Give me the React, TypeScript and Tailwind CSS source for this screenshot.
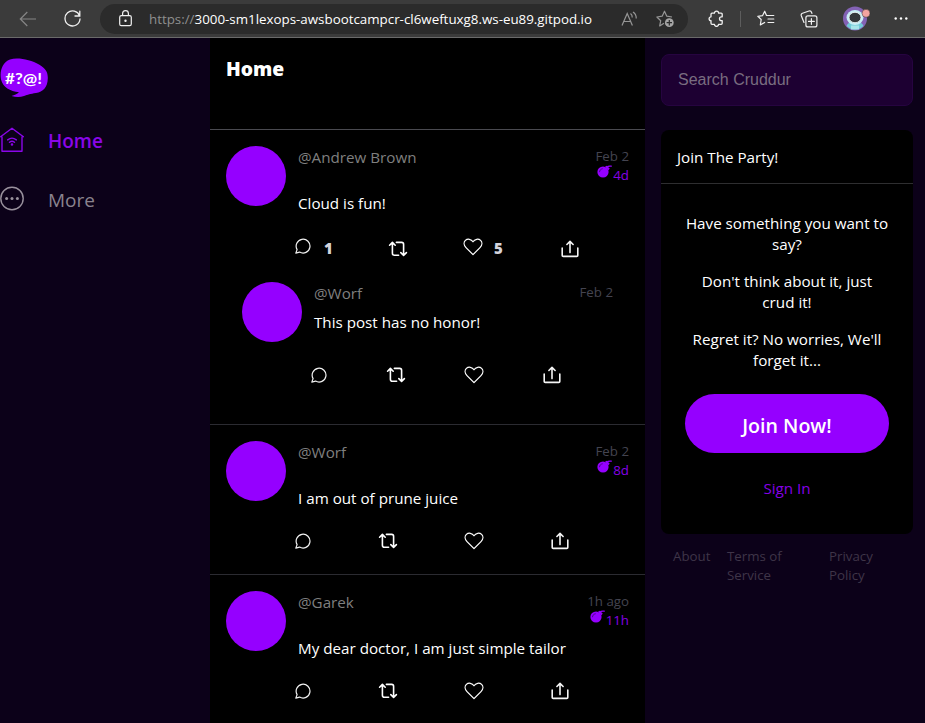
import React from "react";

const SANS = "font-['Open_Sans','Noto_Sans',sans-serif]";

function ReplyIcon() {
  return (
    <svg width="16" height="16" viewBox="0 0 16 16" fill="none" stroke="#f2f2f2" strokeWidth="1.2" strokeLinejoin="round">
      <path d="M2.1 11.6A6.9 6.9 0 1 1 4.6 14.1L.8 15.1Z" />
    </svg>
  );
}

function RepostIcon() {
  return (
    <svg width="20" height="16" viewBox="0 0 20 16" fill="none" stroke="#fff" strokeWidth="1.6" strokeLinecap="round" strokeLinejoin="round">
      <path d="M1.6 4.2 4.4 1.4l2.8 2.8M4.4 1.8v10.4a2 2 0 0 0 2 2h4.2" />
      <path d="M8.4 1.4h5.2a2 2 0 0 1 2 2v10.6M12.8 11.6l2.8 2.8 2.8-2.8" />
    </svg>
  );
}

function HeartIcon() {
  return (
    <svg width="20" height="18" viewBox="0 0 20 18" fill="none" stroke="#fff" strokeWidth="1.25" strokeLinejoin="round">
      <path d="M10 16.6 3 9.6C.6 7.200.6 4.200 2.400 2.400 4.500.5 8.200.8 10 3.800 11.800.8 15.500.5 17.600 2.400 19.400 4.200 19.400 7.200 17 9.600Z" />
    </svg>
  );
}

function ShareIcon() {
  return (
    <svg width="18" height="18" viewBox="0 0 18 18" fill="none" stroke="#f5f5f5" strokeWidth="1.6" strokeLinecap="round" strokeLinejoin="round">
      <path d="M1.200 8v7.400a1 1 0 0 0 1 1h13.600a1 1 0 0 0 1-1V8" />
      <path d="M9 12.600V1.400M5.900 4.500 9 1.400l3.100 3.100" />
    </svg>
  );
}

function BombIcon() {
  return (
    <svg className="-mt-px" width="15" height="13" viewBox="0 0 15 13" fill="#9500ff">
      <circle cx="6" cy="7" r="5.600" />
      <path d="m8 1.700 1.700-.9 3 2.700-1.200 1.700Z" />
      <path d="M10 2.200c1-1.300 2.200-1.300 4.300-1" fill="none" stroke="#9500ff" strokeWidth="1.200" strokeLinecap="round" />
      <path d="M2.500 6.800c.2-1.700 1.200-2.700 2.800-3" fill="none" stroke="#3c0070" strokeWidth=".8" strokeLinecap="round" />
    </svg>
  );
}

function Avatar() {
  return <div className="size-[60px] shrink-0 rounded-full bg-[#9500ff]" />;
}

function Time({ ago, expires }: { ago: string; expires?: string }) {
  return (
    <div className="flex flex-col items-end pt-px text-[13.3px] leading-[19px]">
      <span className="text-[#444450]">{ago}</span>
      {expires && (
        <span className="flex items-start gap-px text-[#8500e6]">
          <BombIcon />
          {expires}
        </span>
      )}
    </div>
  );
}

function Actions({ nested = false }: { nested?: boolean }) {
  return (
    <div className={`flex h-[18px] items-center justify-between ${nested ? "w-[250px]" : "w-[274px]"}`}>
      <ReplyIcon />
      <RepostIcon />
      <HeartIcon />
      <ShareIcon />
    </div>
  );
}

function Post({ handle, message, ago, expires, children }: { handle: string; message: string; ago: string; expires: string; children: React.ReactNode }) {
  return (
    <article className="border-b border-[#2b2b31] px-4 pt-4">
      <div className="flex">
        <Avatar />
        <div className="ml-3 flex-1 text-[15.2px] leading-[22px]">
          <div className="text-[#7f7f7f]">{handle}</div>
          <p className="mt-6 whitespace-nowrap text-white">{message}</p>
        </div>
        <Time ago={ago} expires={expires} />
      </div>
      {children}
    </article>
  );
}

function NavIcon({ children, color }: { children: React.ReactNode; color: string }) {
  return (
    <svg width="24" height="26" viewBox="0 0 24 26" fill="none" stroke={color} strokeWidth="1.400" strokeLinecap="round" strokeLinejoin="round">
      {children}
    </svg>
  );
}

function BrowserBar() {
  return (
    <header className="flex h-[38px] shrink-0 items-center border-b border-[#6a6a6a] bg-[#3b3b3b]">
      <svg className="ml-[19px]" width="18" height="16" viewBox="0 0 18 16" fill="none" stroke="#858585" strokeWidth="1.200">
        <path d="M17 8H1.500M8.300 1 1.300 8l7 7" />
      </svg>
      <svg className="ml-[27px]" width="17" height="18" viewBox="0 0 17 18" fill="none" stroke="#f0f0f0" strokeWidth="1.300" strokeLinecap="round">
        <path d="M15.600 6A7.500 7.500 0 1 0 16 9M15.800 1.200V6h-4.800" />
      </svg>
      <div className="ml-[19px] flex h-[30px] w-[588px] items-center rounded-full bg-[#2b2b2b] pl-[19px]">
        <svg width="13" height="17" viewBox="0 0 13 17" fill="none" stroke="#f0f0f0" strokeWidth="1.200">
          <rect x=".7" y="5.700" width="11.600" height="10" rx="1.600" />
          <path d="M3.600 5.700V3.500a2.900 2.900 0 0 1 5.800 0v2.200" />
          <circle cx="6.500" cy="10.700" r=".6" fill="#fff" />
        </svg>
        <span className="ml-[17px] w-[443px] whitespace-nowrap text-[13.35px] leading-5 text-white">
          <span className="text-[#8f8f8f]">https://</span>3000-sm1lexops-awsbootcampcr-cl6weftuxg8.ws-eu89.gitpod.io
        </span>
        <svg className="ml-[29px]" width="17" height="16" viewBox="0 0 17 16" fill="none" stroke="#969696" strokeWidth="1.200">
          <path d="m1 14.500 5.200-12 5.200 12M2.800 10.500h6.800M9.500 2.500q2 1.600 1.700 4M12 1q3.500 2.300 3.200 6.500" />
        </svg>
        <svg className="ml-[18px]" width="19" height="18" viewBox="0 0 19 18" fill="none" stroke="#969696" strokeWidth="1.200" strokeLinejoin="round">
          <path d="M8 13.200 3.700 15.900 4.700 10.700.9 7 6.200 6.200 8.500 1.200 10.800 6.200 16 7" />
          <circle cx="13.300" cy="12.700" r="4.400" fill="#a6a6a6" stroke="none" />
          <path d="M13.300 10v5.400M10.600 12.700H16" stroke="#2b2b2b" />
        </svg>
      </div>
      <svg className="ml-[20px]" width="16" height="17" viewBox="0 0 16 17" fill="none" stroke="#f0f0f0" strokeWidth="1.300" strokeLinejoin="round">
        <path d="M4 3.200h2.400a2.100 2.100 0 0 1 4.200 0h2.600a1 1 0 0 1 1 1v2.600h-.8a1.900 1.900 0 0 0 0 3.800h.8v2.700a1 1 0 0 1-1 1h-2.600a2.100 2.100 0 0 1-4.200 0H4a1 1 0 0 1-1-1v-2.700a1.900 1.900 0 0 1 0-3.800V4.200a1 1 0 0 1 1-1Z" />
      </svg>
      <div className="ml-4 h-4 w-px bg-[#5d5d5d]" />
      <svg className="ml-4" width="18" height="17" viewBox="0 0 18 17" fill="none" stroke="#f0f0f0" strokeWidth="1.200" strokeLinejoin="round" strokeLinecap="round">
        <path d="M9.500 5.500 7.700 1.200 5.500 5.700.8 6.300 4.200 9.500 3.300 15 7.600 12.400M9.500 5.500h7.300M11 9h5.800M11 12.500h5.800" />
      </svg>
      <svg className="ml-[25px]" width="18" height="18" viewBox="0 0 18 18" fill="none" stroke="#f0f0f0" strokeWidth="1.200" strokeLinecap="round">
        <rect x="5.900" y="5.900" width="11" height="11" rx="2" />
        <path d="M11.400 8.500v5.800M8.500 11.400h5.800M4 12.500 1.300 5.700a2 2 0 0 1 1.200-2.500L9 1a2 2 0 0 1 2.500 1.200l.4 1.200" />
      </svg>
      <svg className="ml-[24px]" width="29" height="25" viewBox="0 0 29 25">
        <circle cx="13" cy="12.500" r="12" fill="#8362b5" />
        <path d="M4.500 20Q6 15.500 13 15.500t8.500 4.500A12 12 0 0 1 4.500 20Z" fill="#72cad8" />
        <ellipse cx="13" cy="11.500" rx="8.500" ry="7.500" fill="#c7edf5" />
        <ellipse cx="13" cy="11.500" rx="6" ry="5.200" fill="#33363a" stroke="#f7ffff" strokeWidth=".8" />
        <path d="M9 19.500h8v4H9Z" fill="#a7e4e9" />
        <circle cx="24" cy="7.300" r="4" fill="#f3a4a0" stroke="#333" strokeWidth=".5" />
      </svg>
      <svg className="ml-[23px]" width="14" height="4" viewBox="0 0 14 4" fill="#fff">
        <circle cx="1.700" cy="1.500" r="1.200" />
        <circle cx="7" cy="1.500" r="1.200" />
        <circle cx="12.300" cy="1.500" r="1.200" />
      </svg>
    </header>
  );
}

export default function App() {
  return (
    <div className={`flex h-[723px] w-[925px] flex-col overflow-hidden bg-black ${SANS}`}>
      <BrowserBar />
      <main className="flex min-h-0 flex-1">
        <nav className="w-[210px] shrink-0 bg-[#0c0119] pt-5 text-[19px] leading-6">
          <svg width="49" height="40" viewBox="0 0 49 40">
            <path d="M10 1.500C18-1 31 2 39 6.500c7 4 9 8 8.800 14C47.500 29.500 43 34 36 35c-6 1-8 1.500-12 3-4 1.200-8 1.200-12.500-.1 3-.6 5.500-1.800 7.500-3.600C10 33 3 29.500 1 21.500-.5 13.500 2 4.500 10 1.500Z" fill="#9500ff" />
            <text x="5" y="25.500" fill="#fff" fontFamily="Lato" fontSize="16" fontWeight="700" textLength="37" lengthAdjust="spacingAndGlyphs">#?@!</text>
          </svg>
          <a className="mt-[29px] flex items-center gap-6 font-semibold text-[#8a06e8]">
            <NavIcon color="#8a06e8">
              <path d="M2 10v14.200h20V10M.6 9.700 12 1.200l11.400 8.500M7.700 12.900q4.300-3.500 8.600 0M9.500 15.300q2.500-2 5 0" />
              <circle cx="12" cy="17.500" r=".6" fill="#8a06e8" />
            </NavIcon>
            <span className="mt-[2px]">Home</span>
          </a>
          <a className="mt-[33px] flex items-center gap-6 text-[#8a838e]">
            <NavIcon color="#99919d">
              <circle cx="12" cy="12.500" r="11.200" />
              <g fill="#99919d" stroke="none">
                <circle cx="6.600" cy="12.500" r="1.500" />
                <circle cx="12" cy="12.500" r="1.500" />
                <circle cx="17.400" cy="12.500" r="1.500" />
              </g>
            </NavIcon>
            <span className="mt-[2px]">More</span>
          </a>
        </nav>

        <section className="w-[435px] shrink-0 bg-black">
          <div className="h-[92px] border-b border-[#4a4a50] px-4 pt-[19px] text-[19.3px] leading-6 font-extrabold text-white">Home</div>

          <Post handle="@Andrew Brown" message="Cloud is fun!" ago="Feb 2" expires="4d">
            <div className="mt-6 ml-[69px] flex h-[22px] items-start text-[15px] leading-[20px] font-extrabold text-[#d4d4dc]">
              <ReplyIcon />
              <span className="ml-[13px] w-[9px]">1</span>
              <span className="mt-[3px] ml-[55px]"><RepostIcon /></span>
              <span className="ml-[55px]"><HeartIcon /></span>
              <span className="ml-[11px] w-[9px]">5</span>
              <span className="mt-[2px] ml-[58px]"><ShareIcon /></span>
            </div>
            <div className="mt-[22px] pb-10 pl-4">
              <div className="flex">
                <Avatar />
                <div className="ml-3 flex-1 text-[15.2px] leading-[22px]">
                  <div className="text-[#7f7f7f]">@Worf</div>
                  <p className="mt-[7px] text-white">This post has no honor!</p>
                </div>
                <div className="pr-4"><Time ago="Feb 2" /></div>
              </div>
              <div className="mt-6 ml-[69px]"><Actions nested /></div>
            </div>
          </Post>
          <Post handle="@Worf" message="I am out of prune juice" ago="Feb 2" expires="8d">
            <div className="mt-[23px] ml-[69px] pb-6"><Actions /></div>
          </Post>
          <Post handle="@Garek" message="My dear doctor, I am just simple tailor" ago="1h ago" expires="11h">
            <div className="mt-[23px] ml-[69px] pb-6"><Actions /></div>
          </Post>
        </section>

        <aside className="flex-1 bg-[#0c0119] pt-4 pr-3 pl-4">
          <input
            className="block h-[52px] w-full rounded-lg border border-[#260440] bg-[#1d0032] px-4 font-['Liberation_Sans',sans-serif] text-base placeholder:text-[#796d80]"
            placeholder="Search Cruddur"
          />
          <div className="mt-6 h-[404px] rounded-lg bg-black text-[15.2px] leading-[21px] text-white">
            <div className="h-[54px] border-b border-[#2e2e30] px-4 pt-[17px]">Join The Party!</div>
            <div className="px-6 pt-[29px] text-center">
              <p>Have something you want to<br />say?</p>
              <p className="mt-4">Don't think about it, just<br />crud it!</p>
              <p className="mt-4">Regret it? No worries, We'll<br />forget it...</p>
              <button className="mt-[23px] block h-[59px] w-full rounded-full bg-[#9500ff] pt-[3px] text-[19.6px] font-semibold text-white">Join Now!</button>
              <a className="mt-[25px] block text-[#8500e6]">Sign In</a>
            </div>
          </div>
          <footer className="flex pt-[13px] pl-3 text-[13.3px] leading-[19px] text-[#3f3548]">
            <a className="w-[54px]">About</a>
            <a className="w-[102px]">Terms of<br />Service</a>
            <a>Privacy<br />Policy</a>
          </footer>
        </aside>
      </main>
    </div>
  );
}
